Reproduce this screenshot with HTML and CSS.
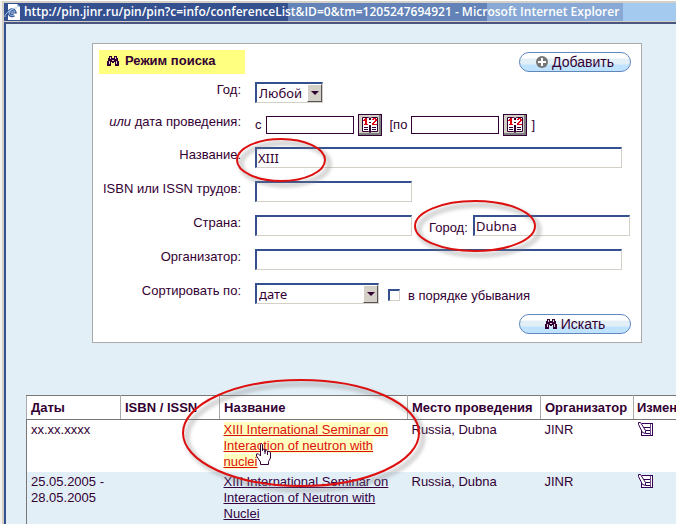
FILE: index.html
```html
<!DOCTYPE html>
<html lang="ru">
<head>
<meta charset="utf-8">
<title>conferenceList</title>
<link rel="stylesheet" href="styles.css">
</head>
<body>
<svg class="defs" aria-hidden="true">
  <defs>
    <filter id="soft" x="-20%" y="-20%" width="140%" height="140%"><feGaussianBlur stdDeviation="1.5"/></filter>
    <symbol id="binoculars" viewBox="0 0 12 10">
      <path d="M2 0h3v2h2V0h3v2h1v3h1v5H8V6H7v1H5V6H4v4H0V5h1V2h1z"/>
      <path fill="#fff" fill-opacity=".8" d="M3 1h1v2H3zM8 1h1v2H8zM2 5h1v3H2zM9 5h1v3H9zM5 4h2v1H5z"/>
    </symbol>
    <symbol id="edit" viewBox="0 0 15 14">
      <path fill="#fff" d="M4 1h11v13H4z"/>
      <path fill="none" stroke="#330055" d="M4 1.500h11M14.500 1v13M3 13.500h12M6 5.500h6M8 8.500h4M8 11.500h4M3.500 8v6"/>
      <path fill="none" stroke="#330055" stroke-opacity=".7" d="M12.500 2v11"/>
      <path fill="#fff" stroke="#330055" d="M.5.500h2l5 8v3l-3-1-4-8z"/>
    </symbol>
    <symbol id="calendar" viewBox="0 0 18 16">
      <path fill="#fff" stroke="#330033" d="M1.500.500h6l1.500 1 1.500-1h6v14h-6l-1.500 1-1.500-1h-6z"/>
      <path fill="none" stroke="#330033" stroke-width="2" d="M9 1v2M9 8v7"/>
      <path fill="none" stroke="#330033" d="M3 10.500h4M3 12.500h4M11 10.500h4M11 12.500h4M8 5.500h2"/>
      <path fill="#e00010" d="M4 1h2v6h1v1H3V7h1V4H2V3h1V2h1zM11 2h1V1h3v1h1v2h-1v1h-1v1h-1v1h3v1h-5V6h1V5h1V4h1V2h-1v1h-2z"/>
    </symbol>
  </defs>
</svg>
<header class="titlebar">
  <svg class="ie" viewBox="0 0 16 16" aria-hidden="true">
    <path fill="#fff" d="M4 0h9l3 3v13H4z"/><path fill="#a5caef" d="M13 0v3h3z"/>
    <path fill="none" stroke="#34508f" stroke-width="3" d="M10 11a3 3 0 1 1 1-3H5"/>
    <path fill="none" stroke="#a5caef" d="M10 11a3 3 0 1 1 1-3H5M1 13c-1-3 8-10 12-9"/>
  </svg>
  <span>http://pin.jinr.ru/pin/pin?c=info/conferenceList&amp;ID=0&amp;tm=1205247694921 - Microsoft Internet Explorer</span>
</header>
<main class="page">
  <form class="panel">
    <div class="bar">
      <h1 class="mode"><svg class="bino" aria-hidden="true"><use href="#binoculars"/></svg>Режим поиска</h1>
      <button type="button" class="pill"><svg class="plus" viewBox="0 0 12 12" aria-hidden="true"><circle cx="6" cy="6" r="6" fill="#777"/><path d="M6 2v8M2 6h8" stroke="#fff" stroke-width="2"/></svg>Добавить</button>
    </div>
    <div class="fields">
      <label class="name" for="year">Год:</label>
      <div class="field first"><span class="drop year"><select id="year"><option>Любой</option></select><i class="arrow"></i></span></div>

      <label class="name" for="from"><em>или</em> дата проведения:</label>
      <div class="field dates">
        <label for="from">с</label><input class="date" id="from" type="text">
        <button type="button" class="cal" aria-label="с"><svg><use href="#calendar"/></svg></button>
        <label class="to" for="till">[по</label><input class="date" id="till" type="text">
        <button type="button" class="cal" aria-label="по"><svg><use href="#calendar"/></svg></button><span>]</span>
      </div>

      <label class="name" for="title">Название:</label>
      <div class="field"><input class="long" id="title" type="text" value="XIII">
        <svg class="mark mark-title" viewBox="0 0 100 60" aria-hidden="true"><ellipse class="shade" cx="50" cy="29" rx="44" ry="21"/><ellipse class="ring" cx="46" cy="25" rx="44" ry="21"/></svg>
      </div>

      <label class="name" for="isbn">ISBN или ISSN трудов:</label>
      <div class="field"><input class="short" id="isbn" type="text"></div>

      <label class="name" for="country">Страна:</label>
      <div class="field"><input class="short" id="country" type="text">
        <span class="city"><label for="city">Город:</label><input class="short" id="city" type="text" value="Dubna">
          <svg class="mark mark-city" viewBox="0 0 132 64" aria-hidden="true"><ellipse class="shade" cx="66" cy="31" rx="60" ry="25"/><ellipse class="ring" cx="62" cy="27" rx="60" ry="25"/></svg>
        </span>
      </div>

      <label class="name" for="org">Организатор:</label>
      <div class="field"><input class="long" id="org" type="text"></div>

      <label class="name" for="sort">Сортировать по:</label>
      <div class="field"><span class="drop sort"><select id="sort"><option>дате</option></select><i class="arrow"></i></span><input class="tick" id="desc" type="checkbox"><label class="small" for="desc">в порядке убывания</label></div>
    </div>
    <div class="bar end">
      <button type="submit" class="pill"><svg class="bino" aria-hidden="true"><use href="#binoculars"/></svg>Искать</button>
    </div>
  </form>

  <div class="results">
    <table>
      <colgroup><col class="c1"><col class="c2"><col class="c3"><col class="c4"><col class="c5"><col></colgroup>
      <thead><tr><th>Даты</th><th>ISBN / ISSN</th><th>Название</th><th>Место проведения</th><th>Организатор</th><th>Измен</th></tr></thead>
      <tbody>
        <tr><td>xx.xx.xxxx</td><td></td><td><a class="hot" href="#">XIII International Seminar on Interaction of neutron with nuclei</a></td><td>Russia, Dubna</td><td>JINR</td><td><a href="#" aria-label="Измен"><svg class="edit"><use href="#edit"/></svg></a></td></tr>
        <tr><td>25.05.2005 - 28.05.2005</td><td></td><td><a href="#">XIII International Seminar on Interaction of Neutron with Nuclei</a></td><td>Russia, Dubna</td><td>JINR</td><td><a href="#" aria-label="Измен"><svg class="edit"><use href="#edit"/></svg></a></td></tr>
      </tbody>
    </table>
    <svg class="mark mark-row" viewBox="0 0 250 122" aria-hidden="true"><ellipse class="shade" cx="125" cy="60" rx="118" ry="53"/><ellipse class="ring" cx="121" cy="56" rx="118" ry="53"/></svg>
    <svg class="hand" viewBox="0 0 17 22" aria-hidden="true"><path fill="#fff" stroke="#330033" d="M5.500 13V1.500q1-1.500 2 0V8V6.500q1.500-1 2.500.500V9V7.500q1.500-1 2.500.500V10V8.500q1.500-1 3 1V15l-2 3.500v3h-8v-2.500L1.500 13v-2q1.500-1.500 4 2zM10 8v3M12.500 9v3"/></svg>
  </div>
</main>
</body>
</html>
```
FILE: styles.css
```css
* { box-sizing: border-box; }
body {
  margin: 0;
  min-height: 100vh;
  padding: 2px 0 0 4px;
  overflow: hidden;
  display: flex;
  flex-direction: column;
  background: linear-gradient(90deg, #f4f2ee 0 2px, #d4d0c8 2px);
  border-top: 1px solid #fff;
  color: #330033;
  font: 13px/16px "Liberation Sans", Arial, sans-serif;
}
.defs { position: absolute; width: 0; height: 0; }
.titlebar {
  height: 18px;
  display: flex;
  align-items: center;
  gap: 4px;
  white-space: nowrap;
  overflow: hidden;
  color: #fff;
  font: 600 12px/18px "Open Sans", sans-serif;
  background: linear-gradient(90deg, #34508f 0 284px, #6282b8 284px 483px, #88a9d5 483px 619px, #a5caef 619px);
}
.ie { width: 16px; height: 16px; flex: none; }
.page {
  flex: 1;
  margin-top: 1px;
  background: #e2eff7;
  border-top: 2px solid #4a5680;
  border-left: 2px solid #34508f;
  padding: 19px 0 0 20px;
}
.panel {
  margin: 0 34px 0 66px;
  padding: 6px 10px 8px 6px;
  background: #fff;
  border: 1px solid #aaa;
}
.bar { display: flex; justify-content: space-between; align-items: center; }
.end { justify-content: flex-end; }
.mode {
  margin: 0;
  width: 146px;
  height: 24px;
  padding: 0 8px 2px;
  display: flex;
  align-items: center;
  gap: 6px;
  background: #ffff80;
  font-size: 13px;
}
.bino { width: 12px; height: 10px; fill: #330033; flex: none; }
.plus { width: 12px; height: 12px; flex: none; }
.pill {
  width: 112px;
  height: 20px;
  padding: 0;
  display: flex;
  align-items: center;
  justify-content: center;
  gap: 4px;
  border: 1px solid #5f86bd;
  border-radius: 10px;
  background: linear-gradient(#fff 0 5px, #e2eff7 6px 11px, #bfe3ff 12px);
  color: #330033;
  font: 14px/18px "Liberation Sans", Arial, sans-serif;
}
.fields {
  margin: 8px 0;
  display: grid;
  grid-template-columns: 142px 1fr;
  column-gap: 14px;
  row-gap: 11px;
}
.name { text-align: right; white-space: nowrap; }
em { font-style: italic; }
.field { position: relative; display: flex; align-items: flex-start; height: 23px; }
.first { height: 21px; }
.dates { height: 22px; align-items: center; white-space: nowrap; }
input, select { color: #330033; font: 13px/17px "Noto Sans", sans-serif; }
input[type="text"] {
  height: 21px;
  padding: 0 1px;
  background: #fff;
  border: 1px solid #d4d0c8;
  border-top: 2px solid #34508f;
  border-left: 2px solid #34508f;
}
input.long { width: 367px; }
input.short { width: 157px; flex: none; }
input[type="text"].date {
  width: 88px;
  height: 18px;
  margin: 0 4px;
  border: 1px solid #330033;
}
.cal {
  width: 24px;
  height: 22px;
  padding: 2px;
  display: flex;
  flex: none;
  background: #d4d0c8;
  border: 1px solid #330033;
  box-shadow: inset -2px -2px #808080;
}
.cal svg { width: 18px; height: 16px; }
.to { margin-left: 8px; }
.cal + span { margin-left: 4px; }
.drop { position: relative; height: 21px; }
.drop select {
  width: 100%;
  height: 21px;
  padding: 0 2px;
  appearance: none;
  background: #fff;
  border: 1px solid #d4d0c8;
  border-top: 2px solid #34508f;
  border-left: 2px solid #34508f;
  border-radius: 0;
}
.year { width: 68px; }
.sort { width: 124px; }
.arrow {
  position: absolute;
  top: 2px;
  right: 1px;
  width: 15px;
  height: 18px;
  display: flex;
  align-items: center;
  justify-content: center;
  pointer-events: none;
  background: #d4d0c8;
  border: 1px solid #fff;
  border-right-color: #555;
  border-bottom-color: #555;
}
.arrow::after {
  content: "";
  border: 4px solid transparent;
  border-top-color: #330033;
  border-bottom: 0;
}
.tick {
  appearance: none;
  width: 12px;
  height: 12px;
  margin: 6px 8px 0 9px;
  background: #fff;
  border: 1px solid #d4d0c8;
  border-top: 2px solid #34508f;
  border-left: 2px solid #34508f;
}
.small { margin-top: 5px; }
.city { position: relative; display: flex; gap: 4px; margin-left: 17px; }
.city label { width: 40px; padding-top: 5px; white-space: nowrap; }
.mark { position: absolute; pointer-events: none; z-index: 1; }
.ring { fill: none; stroke: #dd1010; stroke-width: 2; }
.shade { fill: none; stroke: #808080; stroke-opacity: .3; stroke-width: 6; filter: url(#soft); }
.mark-title { left: -20px; top: -12px; width: 100px; height: 60px; }
.mark-city { left: -16px; top: -16px; width: 132px; height: 64px; }
.mark-row { left: 154px; top: -18px; width: 250px; height: 122px; }
.hand { position: absolute; left: 229px; top: 48px; width: 17px; height: 22px; z-index: 2; }
.results { position: relative; margin-top: 52px; }
table {
  width: 100%;
  table-layout: fixed;
  border-collapse: collapse;
  border-left: 1px solid #777;
}
.c1 { width: 94px; }
.c2 { width: 99px; }
.c3 { width: 188px; }
.c4 { width: 133px; }
.c5 { width: 93px; }
th, td { padding: 2px 4px; text-align: left; vertical-align: top; }
th {
  height: 24px;
  padding-right: 0;
  vertical-align: middle;
  white-space: nowrap;
  background: #fff;
  border: 1px solid #777;
  border-right-color: #aaa;
  border-left-color: #aaa;
}
th:last-child { padding-left: 3px; border-right: 0; }
td { height: 52px; }
tbody tr:first-child { background: #fff; }
td a { color: #330044; }
td a.hot { color: #dd1010; background: #ffffbf; }
.edit { width: 15px; height: 14px; display: block; }
```
